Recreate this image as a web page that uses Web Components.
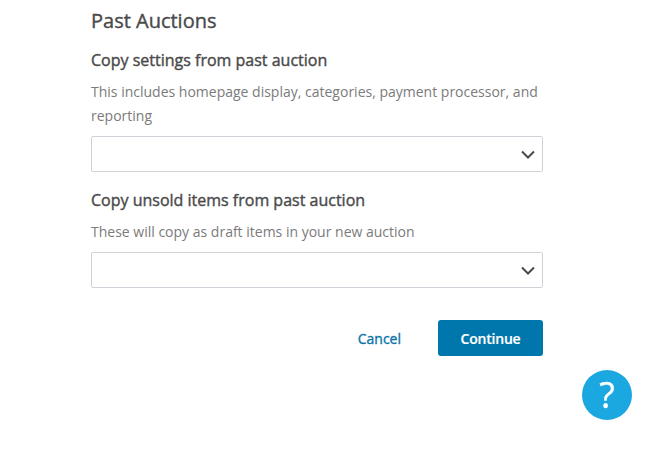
<!DOCTYPE html>
<html>
<head>
<meta charset="utf-8">
<style>
  html, body { margin: 0; height: 100%; background: #fff; overflow: hidden; }
  body { font-family: "Open Sans", sans-serif; }
</style>
</head>
<body>
<past-auctions-form>
  <h-title slot="title">Past Auctions</h-title>
  <auction-field label="Copy settings from past auction" hint="This includes homepage display, categories, payment processor, and reporting"></auction-field>
  <auction-field label="Copy unsold items from past auction" hint="These will copy as draft items in your new auction"></auction-field>
</past-auctions-form>
<help-button></help-button>
<script>
class HTitle extends HTMLElement {
  constructor() {
    super()
    this.attachShadow({ mode: 'open' }).innerHTML = `
      <style>
        :host { display: block; font-size: 20px; line-height: 27px; font-weight: 400; color: #4a4a4a; -webkit-text-stroke: 0.4px #4a4a4a; }
      </style>
      <slot></slot>`
  }
}

class PastAuctionsForm extends HTMLElement {
  constructor() {
    super()
    this.attachShadow({ mode: 'open' }).innerHTML = `
      <style>
        :host { display: block; width: 452px; margin-left: 91px; padding-top: 7px; }
        .fields { display: flex; flex-direction: column; gap: 17px; margin-top: 15px; }
        .actions { display: flex; justify-content: flex-end; align-items: center; gap: 37px; margin-top: 32px; }
        a { font-size: 14px; color: #0a74a8; -webkit-text-stroke: 0.35px #0a74a8; text-decoration: none; }
        button {
          width: 105px; height: 36px; border: 0; border-radius: 3px; padding: 0;
          background: #0077ac; color: #fff; font: 600 14px "Open Sans", sans-serif; letter-spacing: -0.2px;
          -webkit-text-stroke: 0.2px #fff;
        }
      </style>
      <slot name="title"></slot>
      <div class="fields"><slot></slot></div>
      <div class="actions">
        <a href="#">Cancel</a>
        <button>Continue</button>
      </div>`
  }
}

class AuctionField extends HTMLElement {
  constructor() {
    super()
    this.attachShadow({ mode: 'open' }).innerHTML = `
      <style>
        :host { display: block; }
        .label { font-size: 16px; line-height: 22px; color: #4a4a4a; -webkit-text-stroke: 0.4px #4a4a4a; }
        .hint { font-size: 14px; line-height: 24px; color: #7b7b7b; margin-top: 9px; }
        .select {
          display: flex; align-items: center; justify-content: flex-end; box-sizing: border-box;
          height: 36px; margin-top: 8px; padding-right: 7px;
          border: 1px solid #cfd2d8; border-radius: 2px; background: #fff;
        }
        svg { display: block; }
      </style>
      <div class="label">${this.getAttribute('label')}</div>
      <div class="hint">${this.getAttribute('hint')}</div>
      <div class="select">
        <svg width="14" height="9" viewBox="0 0 14 9">
          <path d="M1 1.5l6 6 6-6" fill="none" stroke="#4a4a4a" stroke-width="2"/>
        </svg>
      </div>`
  }
}

class HelpButton extends HTMLElement {
  constructor() {
    super()
    this.attachShadow({ mode: 'open' }).innerHTML = `
      <style>
        :host {
          position: fixed; left: 582px; top: 370px; width: 50px; height: 50px; border-radius: 50%;
          background: #1ba7e0; color: #fff; display: flex; align-items: center; justify-content: center;
          font: 400 36px/1 "Open Sans", sans-serif; -webkit-text-stroke: 0.3px #fff;
        }
      </style>
      ?`
  }
}

customElements.define('h-title', HTitle)
customElements.define('past-auctions-form', PastAuctionsForm)
customElements.define('auction-field', AuctionField)
customElements.define('help-button', HelpButton)
</script>
</body>
</html>
